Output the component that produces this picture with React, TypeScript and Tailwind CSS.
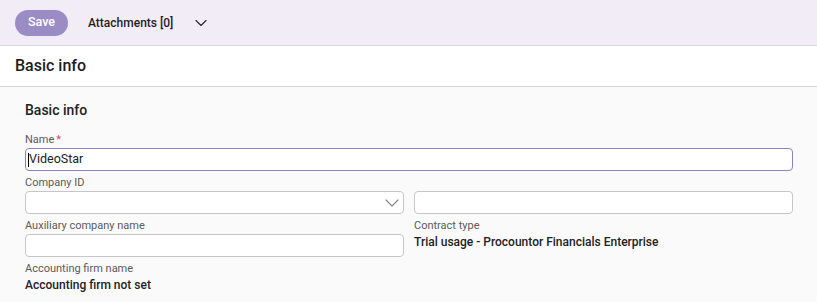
import { ChevronDown } from "lucide-react"

function Label({ children, required }: { children: string; required?: boolean }) {
  return (
    <div className="h-[18px] text-[11px] leading-[19px] text-[#5a5a5a]">
      {children}
      {required && <span className="ml-[2px] text-[#d6456b]">*</span>}
    </div>
  )
}

function TextBox({ focused, children }: { focused?: boolean; children?: React.ReactNode }) {
  return (
    <div
      className={
        focused
          ? "flex h-[23px] items-center rounded-[4px] border border-[#8d80c4] bg-white px-[2px] text-[12.5px] text-[#222]"
          : "flex h-[23px] items-center rounded-[4px] border border-[#c6c6c6] bg-white px-[2px] text-[12.5px] text-[#222]"
      }
    >
      {children}
    </div>
  )
}

export default function App() {
  return (
    <div className="min-h-screen bg-[#fafafa] text-[#222] font-['Roboto','Liberation_Sans',sans-serif]">
      {/* toolbar */}
      <div className="flex h-[46px] items-center border-b border-[#dcd8e2] bg-[#f2ecf7] px-[15px]">
        <button className="h-[26px] w-[53px] rounded-full bg-[#9b8cc5] text-[12.5px] font-medium text-white">
          Save
        </button>
        <span className="ml-[20px] text-[12px] font-medium text-[#1e1e2a]">Attachments [0]</span>
        <ChevronDown className="ml-[18px] h-[20px] w-[20px] text-[#2a2a3a]" strokeWidth={1.4} />
      </div>

      {/* section header */}
      <div className="flex h-[41px] items-center border-b border-[#d6d6d6] bg-white px-[15px] text-[16px] font-medium text-[#1c1c1c]">
        Basic info
      </div>

      {/* form */}
      <div className="pl-[25px] pr-[24px] pt-[13px]">
        <h3 className="mb-[10px] text-[14px] font-medium leading-[20px] text-[#222]">Basic info</h3>

        <Label required>Name</Label>
        <TextBox focused>
          <span className="mr-[-1px] h-[14px] w-[1px] bg-black" />
          <span className="pl-[1px]">VideoStar</span>
        </TextBox>

        <div className="mt-[2px] grid grid-cols-2 gap-x-[10px]">
          <div>
            <Label>Company ID</Label>
            <TextBox>
              <div className="flex-1" />
              <ChevronDown className="mr-[-3px] h-[24px] w-[24px] text-[#8a8a8a]" strokeWidth={1.2} />
            </TextBox>
          </div>
          <div className="pt-[18px]">
            <TextBox />
          </div>

          <div className="mt-[2px]">
            <Label>Auxiliary company name</Label>
            <TextBox />
          </div>
          <div className="mt-[2px]">
            <Label>Contract type</Label>
            <div className="text-[12px] font-medium leading-[16px] text-[#222]">
              Trial usage - Procountor Financials Enterprise
            </div>
          </div>

          <div className="mt-[2px]">
            <Label>Accounting firm name</Label>
            <div className="text-[12px] font-medium leading-[16px] text-[#222]">Accounting firm not set</div>
          </div>
        </div>
      </div>
    </div>
  )
}
